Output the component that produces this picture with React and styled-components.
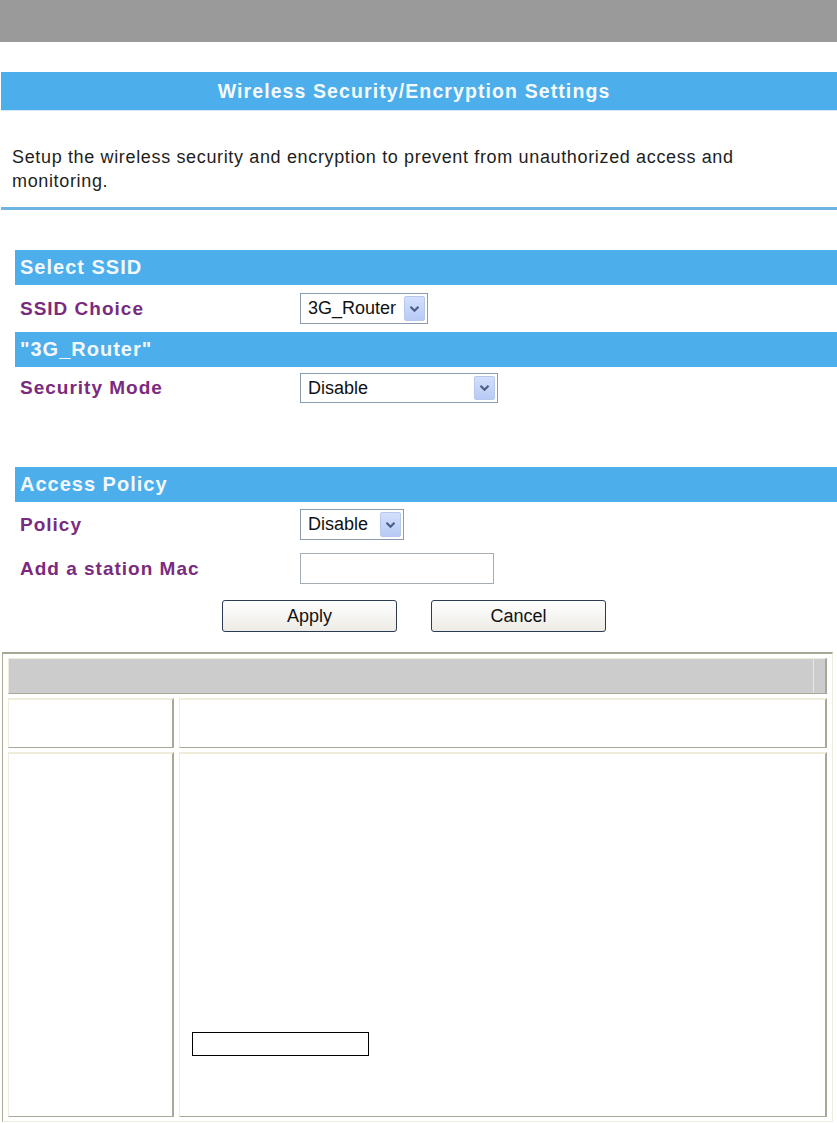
import React from 'react';
import styled, { createGlobalStyle } from 'styled-components';

const GlobalStyle = createGlobalStyle`
  body {
    margin: 0;
    background: #fff;
    font-family: "Liberation Sans", Arial, sans-serif;
  }
`;

const Page = styled.div`
  width: 837px;
  padding-bottom: 1px;
`;

const TopBar = styled.div`
  height: 42px;
  background: #9a9a9a;
`;

const TitleBar = styled.div`
  margin: 30px 0 0 1px;
  padding-right: 10px;
  height: 38px;
  background: #4caeea;
  border-bottom: 1px solid #d3e9f7;
  display: flex;
  align-items: center;
  justify-content: center;
  color: #f4faff;
  font-weight: bold;
  font-size: 19.5px;
  letter-spacing: 1.1px;
`;

const Intro = styled.p`
  margin: 34px 0 0 12px;
  font-size: 18px;
  line-height: 24px;
  letter-spacing: 0.65px;
  color: #1e1e1e;
`;

const Rule = styled.div`
  margin: 14px 0 0 1px;
  height: 3px;
  background: #6cb5e3;
`;

const Form = styled.div`
  padding-left: 15px;
  margin-top: 40px;
`;

const SectionBar = styled.div`
  height: 35px;
  background: #4caeea;
  display: flex;
  align-items: center;
  padding-left: 5px;
  color: #f2f8fd;
  font-weight: bold;
  font-size: 20px;
  letter-spacing: 1px;
  margin-top: ${(p) => p.$gap || 0}px;
`;

const FormRow = styled.div`
  display: grid;
  grid-template-columns: 280px 1fr;
  align-items: center;
  height: ${(p) => p.$h}px;
  padding-left: 5px;
`;

const Label = styled.span`
  color: #7a2b7f;
  font-weight: bold;
  font-size: 19px;
  letter-spacing: 1px;
`;

const Select = styled.div`
  width: ${(p) => p.$w}px;
  height: ${(p) => p.$h || 31}px;
  box-sizing: border-box;
  border: 1px solid #8c9cae;
  background: #fff;
  display: flex;
  align-items: center;
  justify-content: space-between;
  padding: 2px 2px 2px 7px;
  font-size: 18px;
  color: #111;
`;

const ArrowBtn = styled.span`
  width: 21px;
  align-self: stretch;
  box-sizing: border-box;
  border: 1px solid #b7c8ee;
  border-radius: 2px;
  background: linear-gradient(#d3dffb, #b8cbf5);
  display: flex;
  align-items: center;
  justify-content: center;
`;

const TextInput = styled.div`
  width: 194px;
  height: 31px;
  box-sizing: border-box;
  border: 1px solid #a5acb2;
  background: #fff;
`;

const Buttons = styled.div`
  display: flex;
  justify-content: center;
  gap: 34px;
  margin-top: 10px;
  padding-right: 9px;
`;

const Button = styled.button`
  width: 175px;
  height: 32px;
  border: 1px solid #2b3c52;
  border-radius: 3px;
  background: linear-gradient(#ffffff, #ecebe5);
  font-family: "Liberation Sans", Arial, sans-serif;
  font-size: 18px;
  color: #111;
  padding: 0;
`;

const Table = styled.table`
  margin: 20px 0 0 2px;
  width: 831px;
  border-collapse: separate;
  border-spacing: 5px 4px;
  border-top: 2px solid #a9a796;
  border-left: 1px solid #a9a796;
  border-right: 1px solid #efecdc;
  border-bottom: 1px solid #efecdc;
  box-sizing: border-box;
`;

const HeadCell = styled.td`
  height: 34px;
  padding: 0;
  background: #cccccc;
  border-top: 1px solid #efecdc;
  border-left: 1px solid #efecdc;
  border-right: 2px solid #a9a796;
  border-bottom: 1px solid #a9a796;
`;

const HeadInner = styled.div`
  display: flex;
  height: 34px;
`;

const HeadEnd = styled.div`
  width: 11px;
  margin-left: auto;
  border-left: 1px solid #e6e6e6;
`;

const Cell = styled.td`
  height: ${(p) => p.$h}px;
  width: ${(p) => (p.$w ? `${p.$w}px` : 'auto')};
  padding: 0;
  vertical-align: top;
  background: #fff;
  border-top: 2px solid #efecdc;
  border-left: 1px solid #efecdc;
  border-right: 2px solid #a9a796;
  border-bottom: 1px solid #a9a796;
  box-sizing: border-box;
`;

const NoteBox = styled.div`
  margin: 278px 0 0 12px;
  width: 177px;
  height: 24px;
  box-sizing: border-box;
  border: 1px solid #000;
`;

const Chevron = () => (
  <svg width="11" height="8" viewBox="0 0 11 8">
    <path d="M1.5 1.8 L5.5 5.8 L9.5 1.8" fill="none" stroke="#4a5f8a" strokeWidth="2.2" />
  </svg>
);

const Dropdown = ({ value, w, h }) => (
  <Select $w={w} $h={h}>
    <span>{value}</span>
    <ArrowBtn>
      <Chevron />
    </ArrowBtn>
  </Select>
);

const App = () => {
  return (
    <Page>
      <GlobalStyle />
      <TopBar />
      <TitleBar>Wireless Security/Encryption Settings</TitleBar>
      <Intro>
        Setup the wireless security and encryption to prevent from unauthorized access and
        <br />
        monitoring.
      </Intro>
      <Rule />

      <Form>
        <SectionBar>Select SSID</SectionBar>
        <FormRow $h={47}>
          <Label>SSID Choice</Label>
          <Dropdown value="3G_Router" w={128} />
        </FormRow>
        <SectionBar>"3G_Router"</SectionBar>
        <FormRow $h={42}>
          <Label>Security Mode</Label>
          <Dropdown value="Disable" w={198} h={30} />
        </FormRow>

        <SectionBar $gap={58}>Access Policy</SectionBar>
        <FormRow $h={45}>
          <Label>Policy</Label>
          <Dropdown value="Disable" w={104} />
        </FormRow>
        <FormRow $h={43}>
          <Label>Add a station Mac</Label>
          <TextInput />
        </FormRow>
      </Form>

      <Buttons>
        <Button>Apply</Button>
        <Button>Cancel</Button>
      </Buttons>

      <Table>
        <tbody>
          <tr>
            <HeadCell colSpan={2}>
              <HeadInner>
                <HeadEnd />
              </HeadInner>
            </HeadCell>
          </tr>
          <tr>
            <Cell $h={50} $w={166} />
            <Cell $h={50} />
          </tr>
          <tr>
            <Cell $h={365} $w={166} />
            <Cell $h={365}>
              <NoteBox />
            </Cell>
          </tr>
        </tbody>
      </Table>
    </Page>
  );
};

export default App;
